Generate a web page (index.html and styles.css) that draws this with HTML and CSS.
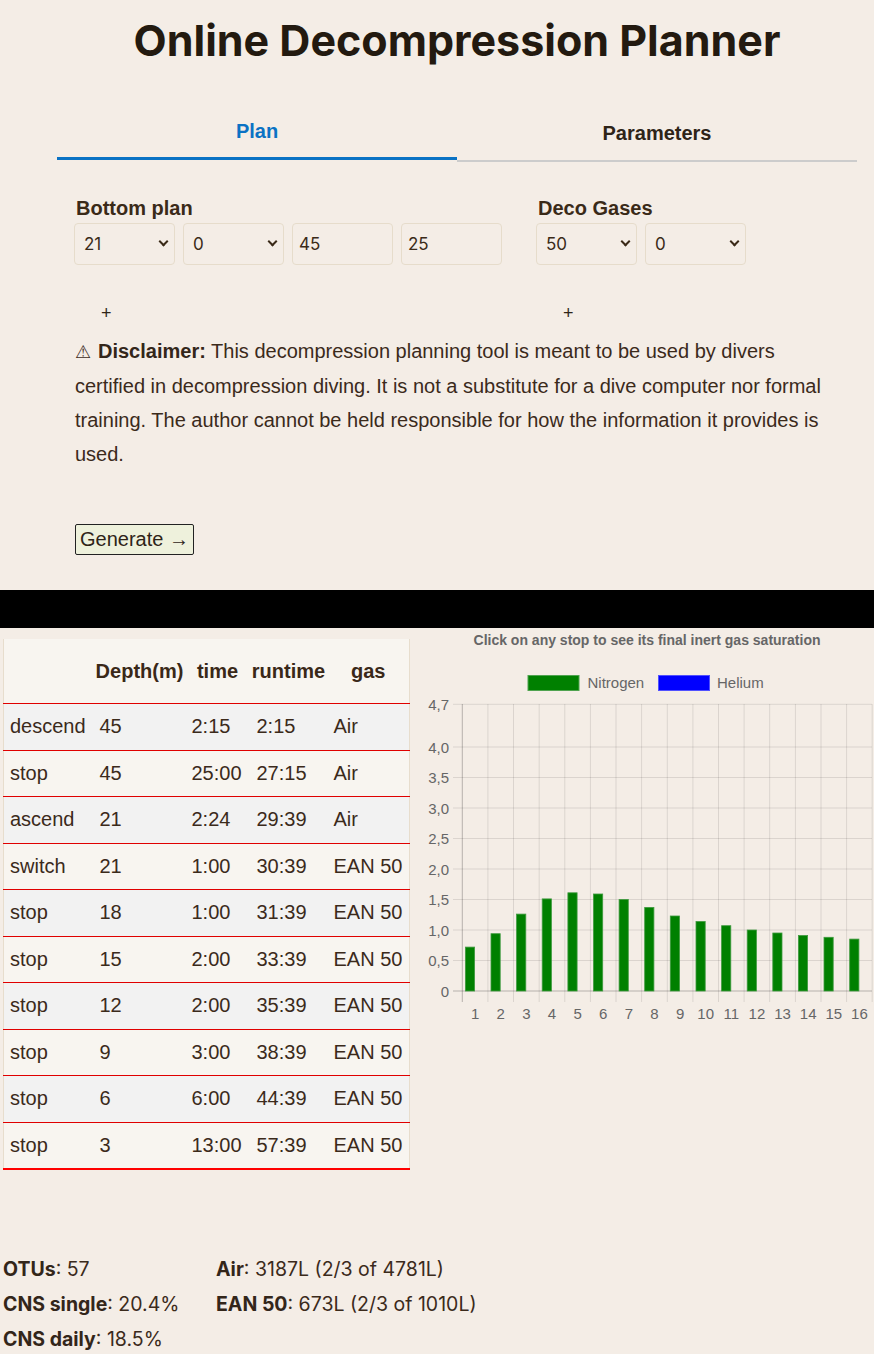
FILE: index.html
```html
<!DOCTYPE html>
<html lang="en">
<head>
<meta charset="utf-8">
<title>Online Decompression Planner</title>
<link rel="stylesheet" href="styles.css">
</head>
<body>
<div class="container">
  <h1 class="title">Online Decompression Planner</h1>
  <div class="tabs">
    <button class="tab tab-active">Plan</button>
    <button class="tab tab-idle">Parameters</button>
  </div>
  <div class="form">
    <div class="columns">
      <div class="group group-bottom">
        <div class="group-label">Bottom plan</div>
        <div class="fields">
          <div class="select-wrap"><select class="field"><option>21</option></select></div>
          <div class="select-wrap"><select class="field"><option>0</option></select></div>
          <input class="field" type="text" value="45">
          <input class="field" type="text" value="25">
        </div>
        <button class="add">+</button>
      </div>
      <div class="group group-deco">
        <div class="group-label">Deco Gases</div>
        <div class="fields">
          <div class="select-wrap"><select class="field"><option>50</option></select></div>
          <div class="select-wrap"><select class="field"><option>0</option></select></div>
        </div>
        <button class="add">+</button>
      </div>
    </div>
    <p class="disclaimer"><span class="warn">⚠</span><b>Disclaimer:</b> This decompression planning tool is meant to be used by divers certified in decompression diving. It is not a substitute for a dive computer nor formal training. The author cannot be held responsible for how the information it provides is used.</p>
    <button class="generate">Generate →</button>
  </div>
</div>
<div class="blackbar"></div>
<div class="results">
  <table class="plan">
    <colgroup><col class="c1"><col class="c2"><col class="c3"><col class="c4"><col class="c5"></colgroup>
    <thead>
      <tr><th></th><th>Depth(m)</th><th>time</th><th>runtime</th><th>gas</th></tr>
    </thead>
    <tbody>
      <tr><td>descend</td><td>45</td><td>2:15</td><td>2:15</td><td>Air</td></tr>
      <tr><td>stop</td><td>45</td><td>25:00</td><td>27:15</td><td>Air</td></tr>
      <tr><td>ascend</td><td>21</td><td>2:24</td><td>29:39</td><td>Air</td></tr>
      <tr><td>switch</td><td>21</td><td>1:00</td><td>30:39</td><td>EAN 50</td></tr>
      <tr><td>stop</td><td>18</td><td>1:00</td><td>31:39</td><td>EAN 50</td></tr>
      <tr><td>stop</td><td>15</td><td>2:00</td><td>33:39</td><td>EAN 50</td></tr>
      <tr><td>stop</td><td>12</td><td>2:00</td><td>35:39</td><td>EAN 50</td></tr>
      <tr><td>stop</td><td>9</td><td>3:00</td><td>38:39</td><td>EAN 50</td></tr>
      <tr><td>stop</td><td>6</td><td>6:00</td><td>44:39</td><td>EAN 50</td></tr>
      <tr><td>stop</td><td>3</td><td>13:00</td><td>57:39</td><td>EAN 50</td></tr>
    </tbody>
  </table>
  <svg class="chart" width="464" height="402" viewBox="0 0 464 402" xmlns="http://www.w3.org/2000/svg">
    <text class="ch-title" x="237" y="17" text-anchor="middle">Click on any stop to see its final inert gas saturation</text>
    <rect x="118" y="47.5" width="51" height="15" fill="#008000" stroke="#4fa34f" stroke-width="1"/>
    <text class="ch-txt" x="177.5" y="60">Nitrogen</text>
    <rect x="248.5" y="47.5" width="51" height="15" fill="#0000ff" stroke="#5050ff" stroke-width="1"/>
    <text class="ch-txt" x="307" y="60">Helium</text>
    <g stroke="rgba(0,0,0,0.1)" stroke-width="1">
      <line x1="43" y1="76.3" x2="462" y2="76.3"/>
      <line x1="43" y1="119" x2="462" y2="119"/>
      <line x1="43" y1="149.5" x2="462" y2="149.5"/>
      <line x1="43" y1="180" x2="462" y2="180"/>
      <line x1="43" y1="210.5" x2="462" y2="210.5"/>
      <line x1="43" y1="241" x2="462" y2="241"/>
      <line x1="43" y1="271.5" x2="462" y2="271.5"/>
      <line x1="43" y1="302" x2="462" y2="302"/>
      <line x1="43" y1="332.5" x2="462" y2="332.5"/>
      <line x1="77.9" y1="76" x2="77.9" y2="374"/>
      <line x1="103.5" y1="76" x2="103.5" y2="374"/>
      <line x1="129.2" y1="76" x2="129.2" y2="374"/>
      <line x1="154.8" y1="76" x2="154.8" y2="374"/>
      <line x1="180.4" y1="76" x2="180.4" y2="374"/>
      <line x1="206" y1="76" x2="206" y2="374"/>
      <line x1="231.6" y1="76" x2="231.6" y2="374"/>
      <line x1="257.3" y1="76" x2="257.3" y2="374"/>
      <line x1="282.9" y1="76" x2="282.9" y2="374"/>
      <line x1="308.5" y1="76" x2="308.5" y2="374"/>
      <line x1="334.1" y1="76" x2="334.1" y2="374"/>
      <line x1="359.7" y1="76" x2="359.7" y2="374"/>
      <line x1="385.4" y1="76" x2="385.4" y2="374"/>
      <line x1="411" y1="76" x2="411" y2="374"/>
      <line x1="436.6" y1="76" x2="436.6" y2="374"/>
      <line x1="462.2" y1="76" x2="462.2" y2="374"/>
    </g>
    <g stroke="rgba(0,0,0,0.25)" stroke-width="1">
      <line x1="52.3" y1="76" x2="52.3" y2="374"/>
      <line x1="43" y1="363" x2="462" y2="363"/>
    </g>
    <g fill="#008000" stroke="#3f9a3f" stroke-width="0.8">
      <rect x="55.4" y="319.1" width="9.2" height="43.9"/>
      <rect x="81" y="305.7" width="9.2" height="57.3"/>
      <rect x="106.6" y="286.1" width="9.2" height="76.9"/>
      <rect x="132.2" y="270.9" width="9.2" height="92.1"/>
      <rect x="157.9" y="264.8" width="9.2" height="98.2"/>
      <rect x="183.5" y="266" width="9.2" height="97"/>
      <rect x="209.1" y="271.5" width="9.2" height="91.5"/>
      <rect x="234.7" y="279.4" width="9.2" height="83.6"/>
      <rect x="260.3" y="288" width="9.2" height="75"/>
      <rect x="286" y="293.5" width="9.2" height="69.5"/>
      <rect x="311.6" y="297.7" width="9.2" height="65.3"/>
      <rect x="337.2" y="302" width="9.2" height="61"/>
      <rect x="362.8" y="305" width="9.2" height="58"/>
      <rect x="388.4" y="307.5" width="9.2" height="55.5"/>
      <rect x="414" y="309.3" width="9.2" height="53.7"/>
      <rect x="439.7" y="311.1" width="9.2" height="51.9"/>
    </g>
    <g class="ch-txt" text-anchor="end">
      <text x="39" y="81.5">4,7</text>
      <text x="39" y="124.5">4,0</text>
      <text x="39" y="155">3,5</text>
      <text x="39" y="185.5">3,0</text>
      <text x="39" y="216">2,5</text>
      <text x="39" y="246.5">2,0</text>
      <text x="39" y="277">1,5</text>
      <text x="39" y="307.5">1,0</text>
      <text x="39" y="338">0,5</text>
      <text x="39" y="368.5">0</text>
    </g>
    <g class="ch-txt" text-anchor="middle">
      <text x="65.1" y="390.5">1</text>
      <text x="90.7" y="390.5">2</text>
      <text x="116.4" y="390.5">3</text>
      <text x="142" y="390.5">4</text>
      <text x="167.6" y="390.5">5</text>
      <text x="193.2" y="390.5">6</text>
      <text x="218.8" y="390.5">7</text>
      <text x="244.5" y="390.5">8</text>
      <text x="270.1" y="390.5">9</text>
      <text x="295.7" y="390.5">10</text>
      <text x="321.3" y="390.5">11</text>
      <text x="346.9" y="390.5">12</text>
      <text x="372.6" y="390.5">13</text>
      <text x="398.2" y="390.5">14</text>
      <text x="423.8" y="390.5">15</text>
      <text x="449.4" y="390.5">16</text>
    </g>
  </svg>
</div>
<div class="stats">
  <div class="stat"><b>OTUs</b>: 57</div>
  <div class="stat"><b>Air</b>: 3187L (2/3 of 4781L)</div>
  <div class="stat"><b>CNS single</b>: 20.4%</div>
  <div class="stat"><b>EAN 50</b>: 673L (2/3 of 1010L)</div>
  <div class="stat"><b>CNS daily</b>: 18.5%</div>
</div>
</body>
</html>
```

FILE: styles.css
```css
html, body {
  margin: 0;
  padding: 0;
}
body {
  background: #f4ede6;
  color: #3b2a1b;
  font-family: "Liberation Sans", Arial, sans-serif;
  font-size: 20px;
}
.container {
  width: 800px;
  margin-left: 57px;
}
.title {
  margin: 14px 0 0;
  font-family: Inter, "Liberation Sans", sans-serif;
  font-weight: 700;
  font-size: 43px;
  line-height: 53px;
  text-align: center;
  color: #231a10;
}
.tabs {
  display: grid;
  grid-template-columns: 1fr 1fr;
  align-items: start;
  margin-top: 38px;
}
.tab {
  font-family: "Liberation Sans", Arial, sans-serif;
  font-weight: 700;
  font-size: 20px;
  line-height: 23px;
  background: none;
  border: none;
  margin: 0;
  cursor: pointer;
}
.tab-active {
  color: #0a72c4;
  padding: 15px 0 14px;
  border-bottom: 3px solid #0a72c4;
}
.tab-idle {
  color: #2e2418;
  padding: 17px 0 15px;
  border-bottom: 2px solid #cccccc;
}
.form {
  padding: 0 17px;
}
.columns {
  display: flex;
  gap: 34px;
  margin-top: 35px;
}
.group-label {
  font-weight: 700;
  font-size: 20px;
  line-height: 23px;
  padding-left: 2px;
  margin-bottom: 3px;
  color: #3a2a18;
}
.fields {
  display: flex;
  gap: 8px;
}
.select-wrap {
  position: relative;
}
.select-wrap::after {
  content: "";
  position: absolute;
  right: 8px;
  top: 15px;
  width: 5px;
  height: 5px;
  border-right: 2px solid #3a2a18;
  border-bottom: 2px solid #3a2a18;
  transform: rotate(45deg);
  pointer-events: none;
}
.field {
  appearance: none;
  -webkit-appearance: none;
  box-sizing: border-box;
  width: 101px;
  height: 42px;
  margin: 0;
  background: transparent;
  border: 1px solid #e6dccb;
  border-radius: 4px;
  font-family: Inter, "Noto Sans", sans-serif;
  font-size: 17px;
  color: #3a2a18;
  padding: 0 9px;
  outline: none;
}
input.field {
  padding: 0 6px;
}
.add {
  display: block;
  margin-top: 37px;
  padding: 0 0 0 27px;
  height: 22px;
  background: none;
  border: none;
  font-family: "Liberation Sans", Arial, sans-serif;
  font-size: 18px;
  line-height: 22px;
  color: #2e2418;
}
.disclaimer {
  margin: 10px 0 0;
  padding-left: 1px;
  line-height: 34px;
  font-size: 20px;
  color: #3b2a1b;
}
.warn {
  display: inline-block;
  width: 23px;
  font-size: 18px;
}
.disclaimer b {
  color: #33261a;
}
.generate {
  display: block;
  margin-top: 53px;
  margin-left: 1px;
  height: 31px;
  padding: 0 4px;
  background: #eef1dc;
  border: 1px solid #222;
  border-radius: 2px;
  font-family: "Liberation Sans", Arial, sans-serif;
  font-size: 20px;
  line-height: 29px;
  color: #2e2418;
}
.blackbar {
  height: 38px;
  margin-top: 35px;
  background: #000;
}
.results {
  display: flex;
  align-items: flex-start;
}
.plan {
  margin: 11px 0 0 3px;
  border-collapse: collapse;
  table-layout: fixed;
  width: 407px;
  border-left: 1px solid #e7ddcd;
  border-right: 1px solid #e7ddcd;
  font-size: 20px;
  color: #3b2a1b;
}
.c1 { width: 90px; }
.c2 { width: 92px; }
.c3 { width: 64px; }
.c4 { width: 78px; }
.c5 { width: 82px; }
.plan th {
  height: 64px;
  padding: 0;
  font-weight: 700;
  text-align: center;
  background: #f8f5f0;
  border-bottom: 1px solid #e00000;
  color: #3a2818;
}
.plan td {
  height: 45.5px;
  padding: 0 2px 0 6px;
  white-space: nowrap;
  overflow: hidden;
  border-bottom: 1px solid #e00000;
}
.plan td:nth-child(3) {
  padding-left: 6px;
}
.plan td:nth-child(4) {
  padding-left: 7px;
}
.plan td:nth-child(5) {
  padding-left: 6px;
}
.plan tbody tr:nth-child(odd) td {
  background: #f2f2f2;
}
.plan tbody tr:nth-child(even) td {
  background: #f8f5f0;
}
.plan tbody tr:last-child td {
  border-bottom: 2px solid #ff0000;
}
.chart {
  display: block;
  flex: none;
}
.ch-title {
  font-family: "Liberation Sans", Arial, sans-serif;
  font-weight: 700;
  font-size: 14px;
  fill: #666666;
}
.ch-txt {
  font-family: "Liberation Sans", Arial, sans-serif;
  font-size: 15px;
  fill: #666666;
}
.stats {
  display: grid;
  grid-template-columns: 213px auto;
  margin-top: 82px;
  padding-left: 3px;
  font-family: Inter, "Noto Sans", sans-serif;
  font-size: 19.5px;
  line-height: 35px;
  color: #3b2a1b;
}
.stat b {
  font-weight: 700;
  color: #33261a;
}
```
